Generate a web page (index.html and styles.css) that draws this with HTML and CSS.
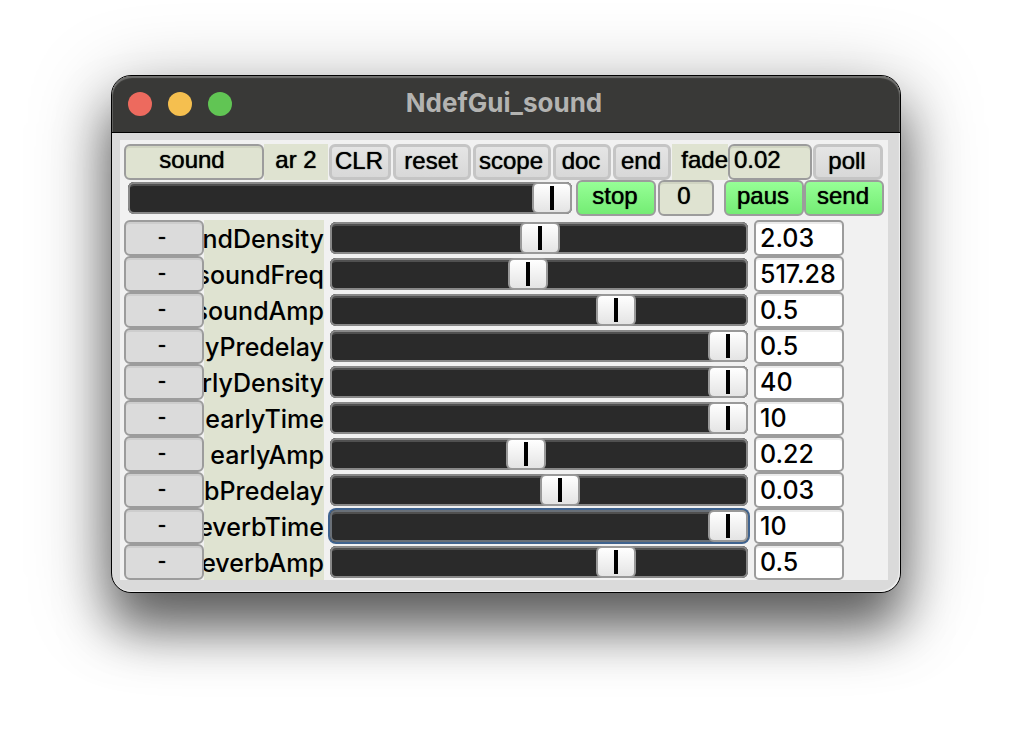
FILE: index.html
```
<!DOCTYPE html>
<html lang="en">
<head>
  <meta charset="UTF-8" />
  <meta name="viewport" content="width=device-width, initial-scale=1.0"/>
  <title>NdefGui_sound</title>
  <link rel="stylesheet" href="styles.css">
</head>
<body>

<div class="window">
  <header class="titlebar">
    <div class="lights">
      <button type="button" class="light close" aria-label="Close"></button>
      <button type="button" class="light minimize" aria-label="Minimize"></button>
      <button type="button" class="light zoom" aria-label="Zoom"></button>
    </div>
    <h1 class="title">NdefGui_sound</h1>
  </header>

  <main class="content">
    <div class="panel">

      <div class="row toolbar">
        <button type="button" class="btn olive">sound</button>
        <span class="tag">ar 2</span>
        <button type="button" class="btn soft">CLR</button>
        <button type="button" class="btn soft">reset</button>
        <button type="button" class="btn soft">scope</button>
        <button type="button" class="btn soft">doc</button>
        <button type="button" class="btn soft">end</button>
        <label class="tag fade" for="fade">fade</label>
        <input class="btn olive fade-box" type="text" id="fade" value="0.02" />
        <button type="button" class="btn soft">poll</button>
      </div>

      <div class="row transport">
        <input class="slider" type="range" min="0" max="1000" value="1000" aria-label="Volume" />
        <button type="button" class="btn green">stop</button>
        <button type="button" class="btn olive channel">0</button>
        <button type="button" class="btn green">paus</button>
        <button type="button" class="btn green">send</button>
      </div>

      <div class="params">
        <div class="row param">
          <button type="button" class="btn map">-</button>
          <label class="name" for="soundDensity">soundDensity</label>
          <input class="slider" type="range" id="soundDensity" min="0" max="1000" value="503" />
          <input class="number" type="text" value="2.03" aria-label="soundDensity value" />
        </div>
        <div class="row param">
          <button type="button" class="btn map">-</button>
          <label class="name" for="soundFreq">soundFreq</label>
          <input class="slider" type="range" id="soundFreq" min="0" max="1000" value="471" />
          <input class="number" type="text" value="517.28" aria-label="soundFreq value" />
        </div>
        <div class="row param">
          <button type="button" class="btn map">-</button>
          <label class="name" for="soundAmp">soundAmp</label>
          <input class="slider" type="range" id="soundAmp" min="0" max="1000" value="704" />
          <input class="number" type="text" value="0.5" aria-label="soundAmp value" />
        </div>
        <div class="row param">
          <button type="button" class="btn map">-</button>
          <label class="name" for="earlyPredelay">earlyPredelay</label>
          <input class="slider" type="range" id="earlyPredelay" min="0" max="1000" value="1000" />
          <input class="number" type="text" value="0.5" aria-label="earlyPredelay value" />
        </div>
        <div class="row param">
          <button type="button" class="btn map">-</button>
          <label class="name" for="earlyDensity">earlyDensity</label>
          <input class="slider" type="range" id="earlyDensity" min="0" max="1000" value="1000" />
          <input class="number" type="text" value="40" aria-label="earlyDensity value" />
        </div>
        <div class="row param">
          <button type="button" class="btn map">-</button>
          <label class="name" for="earlyTime">earlyTime</label>
          <input class="slider" type="range" id="earlyTime" min="0" max="1000" value="1000" />
          <input class="number" type="text" value="10" aria-label="earlyTime value" />
        </div>
        <div class="row param">
          <button type="button" class="btn map">-</button>
          <label class="name" for="earlyAmp">earlyAmp</label>
          <input class="slider" type="range" id="earlyAmp" min="0" max="1000" value="466" />
          <input class="number" type="text" value="0.22" aria-label="earlyAmp value" />
        </div>
        <div class="row param">
          <button type="button" class="btn map">-</button>
          <label class="name" for="reverbPredelay">reverbPredelay</label>
          <input class="slider" type="range" id="reverbPredelay" min="0" max="1000" value="556" />
          <input class="number" type="text" value="0.03" aria-label="reverbPredelay value" />
        </div>
        <div class="row param">
          <button type="button" class="btn map">-</button>
          <label class="name" for="reverbTime">reverbTime</label>
          <input class="slider active" type="range" id="reverbTime" min="0" max="1000" value="1000" />
          <input class="number" type="text" value="10" aria-label="reverbTime value" />
        </div>
        <div class="row param">
          <button type="button" class="btn map">-</button>
          <label class="name" for="reverbAmp">reverbAmp</label>
          <input class="slider" type="range" id="reverbAmp" min="0" max="1000" value="704" />
          <input class="number" type="text" value="0.5" aria-label="reverbAmp value" />
        </div>
      </div>

    </div>
  </main>
</div>

</body>
</html>
```
FILE: styles.css
```
* {
  box-sizing: border-box;
}

body {
  margin: 0;
  min-height: 100vh;
  padding: 75px 111px;
  background: #fff;
  color: #000;
  font-family: "Liberation Sans", Arial, sans-serif;
  font-size: 24px;
}

button, input {
  margin: 0;
  min-width: 0;
  font: inherit;
  color: inherit;
}

.window {
  border: 1px solid #000;
  border-radius: 20px;
  background: #dadada;
  overflow: hidden;
  box-shadow: 0 36px 50px rgba(0,0,0,0.5), 0 16px 80px rgba(0,0,0,0.35);
}

/* title bar */
.titlebar {
  display: grid;
  grid-template-columns: 1fr auto 1fr;
  align-items: center;
  height: 57px;
  padding: 0 20px 0 16px;
  background: #393937;
  border-bottom: 1px solid #000;
  border-radius: 20px 20px 0 0;
  box-shadow: inset 0 2px 1px #71716f, inset 1px 0 #5c5c5a, inset -1px 0 #5c5c5a;
}

.lights {
  display: flex;
  gap: 16px;
}

.light {
  width: 24px;
  height: 24px;
  padding: 0;
  border: none;
  border-radius: 50%;
}

.close {
  background: #ed6a5e;
}

.minimize {
  background: #f5bf4f;
}

.zoom {
  background: #61c554;
}

.title {
  margin: 0;
  padding-bottom: 2px;
  color: #b3b3b1;
  font-family: Inter, sans-serif;
  font-size: 26px;
  font-weight: 700;
  line-height: 32px;
}

/* body */
.content {
  padding: 7px 12px 12px 8px;
  border-radius: 0 0 20px 20px;
  box-shadow: inset -1px -1px 1px #f0f0f0;
}

.panel {
  padding: 4px 4px 0;
  background: #f1f1f1;
}

.row {
  display: grid;
  grid-template-rows: 36px;
}

.toolbar {
  grid-template-columns:
    minmax(0, 140fr) minmax(0, 64fr) minmax(0, 64fr) minmax(0, 80fr) minmax(0, 80fr)
    minmax(0, 60fr) minmax(0, 60fr) minmax(0, 56fr) minmax(0, 84fr) minmax(0, 72fr);
}

.transport {
  grid-template-columns:
    minmax(0, 452fr) minmax(0, 80fr) minmax(0, 68fr) minmax(0, 80fr) minmax(0, 80fr);
}

.param {
  grid-template-columns:
    minmax(0, 80fr) minmax(0, 120fr) minmax(0, 430fr) minmax(0, 90fr) minmax(0, 40fr);
}

.params {
  margin-top: 4px;
}

.btn {
  height: 36px;
  padding: 0 4px 4px 0;
  border: 2px solid #9c9c9c;
  border-radius: 6px;
  background: #dbdbdb;
  line-height: 28px;
  text-align: center;
  text-shadow: 0 0 1px #000;
  white-space: nowrap;
}

.soft {
  padding-right: 2px;
  border: 3px solid #c5c5c5;
  background: linear-gradient(#e5e5e5, #d8d8d8);
  margin: 0 1px;
}

.olive {
  background: #dfe3d1;
  box-shadow: inset 0 2px #d0d4c2;
}

.green {
  padding-right: 2px;
  background: linear-gradient(#96ff96, #74ec74);
}

.map {
  box-shadow: inset 0 2px #cdcdcd;
}

.channel {
  margin: 0 10px 0 2px;
}

.tag {
  padding-bottom: 4px;
  background: #dfe3d1;
  line-height: 32px;
  text-align: center;
  text-shadow: 0 0 1px #000;
  white-space: nowrap;
}

.fade {
  text-align: right;
}

.fade-box {
  padding-left: 4px;
  text-align: left;
}

.name {
  display: flex;
  justify-content: flex-end;
  overflow: hidden;
  background: #dfe3d1;
  font-family: Inter, sans-serif;
  font-size: 25px;
  font-weight: 500;
  line-height: 38px;
}

.number {
  padding: 0 4px;
  border: 2px solid #9c9c9c;
  border-radius: 5px;
  background: #fff;
  box-shadow: inset 0 2px #ebebeb;
  font-family: Inter, sans-serif;
  font-size: 25px;
  font-weight: 500;
  line-height: 32px;
}

/* sliders */
.slider {
  -webkit-appearance: none;
  appearance: none;
  width: auto;
  height: 32px;
  margin: 2px 6px;
  border-radius: 6px;
  background: #2a2a2a;
  box-shadow: inset 0 0 0 2px #888, inset 0 4px #505050;
  outline: none;
}

.transport .slider {
  margin: 2px 4px;
}

.slider.active {
  box-shadow: inset 0 0 0 2px #6a7077, inset 0 4px #505050, 0 0 0 2px #3f638f;
}

.slider::-webkit-slider-thumb {
  -webkit-appearance: none;
  width: 40px;
  height: 32px;
  border: 2px solid #999;
  border-radius: 6px;
  background:
    linear-gradient(#000, #000) center / 4px 24px no-repeat,
    linear-gradient(#fff, #e4e4e4);
}
```
